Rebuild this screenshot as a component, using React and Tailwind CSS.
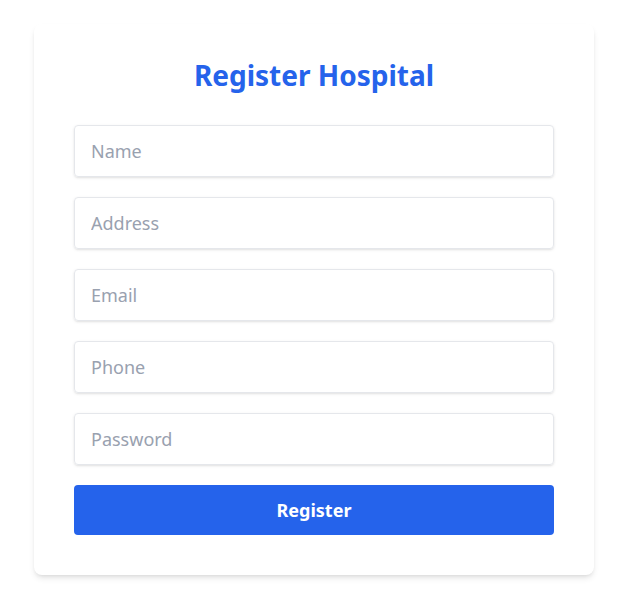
export default function App() {
  const fields = [
    { name: 'name', type: 'text', placeholder: 'Name' },
    { name: 'address', type: 'text', placeholder: 'Address' },
    { name: 'email', type: 'email', placeholder: 'Email' },
    { name: 'phone', type: 'tel', placeholder: 'Phone' },
    { name: 'password', type: 'password', placeholder: 'Password' },
  ];

  return (
    <div className="min-h-screen bg-white pt-6 font-['Noto_Sans',sans-serif]">
      <div className="ml-[34px] w-[560px] rounded-lg bg-white px-10 pt-[33px] pb-10 shadow-md">
        <h2 className="mb-8 text-center text-[28px] leading-9 font-bold text-[#2563eb]">
          Register Hospital
        </h2>

        <form className="flex flex-col gap-5" onSubmit={(e) => e.preventDefault()}>
          {fields.map((f) => (
            <input
              key={f.name}
              name={f.name}
              type={f.type}
              placeholder={f.placeholder}
              className="h-[52px] w-full rounded border border-gray-200 px-4 text-lg text-gray-800 shadow-sm outline-none placeholder:text-gray-400"
            />
          ))}
          <button
            type="submit"
            className="h-[50px] w-full rounded bg-[#2563eb] text-lg font-bold text-white"
          >
            Register
          </button>
        </form>
      </div>
    </div>
  );
}
